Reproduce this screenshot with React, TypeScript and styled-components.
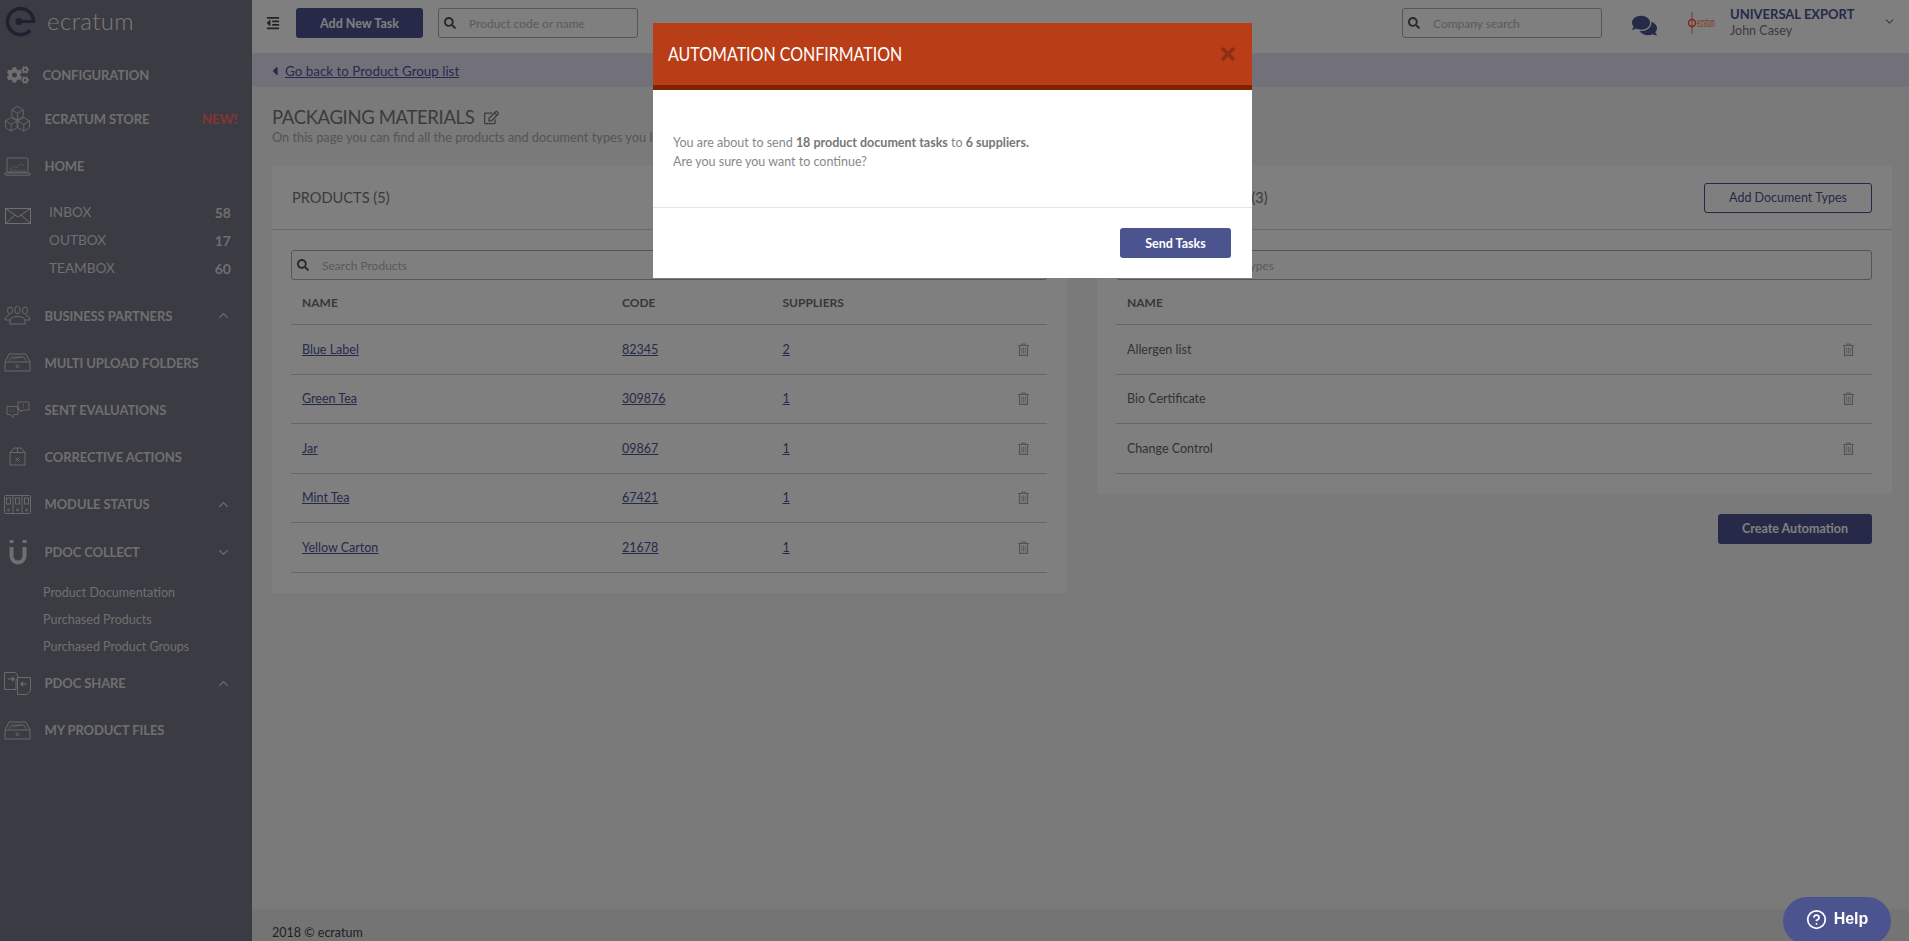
import React from "react";
import styled, { createGlobalStyle } from "styled-components";
import { FaCogs, FaOutdent, FaSearch, FaComments, FaTimes, FaCaretLeft, FaRegEdit } from "react-icons/fa";
import { FiChevronUp, FiChevronDown, FiHelpCircle } from "react-icons/fi";

const Global = createGlobalStyle`
  html, body { margin: 0; padding: 0; height: 100%; overflow: hidden; }
  body { font-family: "Lato", "Liberation Sans", sans-serif; background: #f4f4f4; }
  * { box-sizing: border-box; }
`;

const Shell = styled.div`display: flex; width: 1909px; height: 941px; overflow: hidden;`;
const Sidebar = styled.aside`width: 252px; flex: none; background: #747686; color: #dedede;`;
const Brand = styled.div`height: 53px; display: flex; align-items: center; padding: 0 0 11px 4px; gap: 10px;`;
const BrandName = styled.span`font-size: 24px; font-weight: 300; color: #f2f2f2; letter-spacing: 0.4px; line-height: 1;`;
const NavRow = styled.div<{ $h: number; $mt?: number }>`
  height: ${p => p.$h}px; margin-top: ${p => p.$mt ?? 0}px; display: flex; align-items: center; padding: 0 21px 0 4px;
`;
const NavIcon = styled.span`width: 27px; flex: none; display: flex; justify-content: center; align-items: center; color: #dedede;`;
const NavLabel = styled.span<{ $shift?: number }>`
  margin-left: ${p => 13.5 + (p.$shift ?? 0)}px; flex: 1; font-size: 13px; font-weight: 700; color: #dedede; letter-spacing: -0.1px; white-space: nowrap;
`;
const BoxLabel = styled.span`margin-left: 18px; flex: 1; font-size: 13.6px; font-weight: 400; color: #dedede; white-space: nowrap;`;
const Count = styled.span`font-size: 14px; font-weight: 700; color: #dedede;`;
const NewTag = styled.span`font-size: 13.5px; font-weight: 900; color: #fe6a6a; margin-right: -6px; letter-spacing: -0.3px;`;
const SubList = styled.div`padding-top: 2.5px;`;
const SubRow = styled.div`height: 27px; display: flex; align-items: center; padding-left: 43px; font-size: 12.5px; color: #dedede; white-space: nowrap;`;

const Main = styled.main`flex: 1; min-width: 0; display: flex; flex-direction: column;`;
const TopBar = styled.header`
  height: 54px; flex: none; background: #fff; border-bottom: 1px solid #e6e6e6; display: flex; align-items: flex-start; padding: 8px 0 0 14px; color: #555;
`;
const Burger = styled.span`display: flex; width: 30px; padding-top: 8px; color: #444;`;
const PrimaryButton = styled.button<{ $w: number }>`
  width: ${p => p.$w}px; height: 30px; border: 0; border-radius: 3px; background: #4c5490; color: #fff; font: 700 12.5px "Lato", sans-serif; padding: 0;
`;
const SearchBox = styled.div<{ $w?: number; $ml?: number }>`
  width: ${p => (p.$w ? `${p.$w}px` : "100%")}; height: 30px; margin-left: ${p => p.$ml ?? 0}px; flex: none; display: flex; align-items: center;
  background: #fff; border: 1px solid #aaa; border-radius: 3px; padding-left: 5px; color: #555;
`;
const Placeholder = styled.span<{ $gap: number }>`margin-left: ${p => p.$gap}px; font-size: 12px; color: #b4b4b4; white-space: nowrap;`;
const TopRight = styled.div`margin-left: auto; display: flex; align-items: flex-start;`;
const ChatIcon = styled.span`display: flex; margin: 5px 0 0 30px; color: #4a5493;`;
const Company = styled.div`margin-left: 30px; width: 28px; height: 24px; margin-top: 3px;`;
const UserBlock = styled.div`margin-left: 15px; width: 153px; position: relative; top: -8px;`;
const CompanyName = styled.div`font-size: 13px; font-weight: 700; color: #4a5493; line-height: 17px; margin-top: 6px; white-space: nowrap;`;
const UserName = styled.div`font-size: 12.5px; color: #777; line-height: 15px;`;
const UserChevron = styled.span`display: flex; margin: 7px 13px 0 0; color: #777;`;

const BackBar = styled.div`
  height: 33px; flex: none; background: #e4e2f4; display: flex; align-items: center; padding-left: 15.5px; color: #4d5597; font-size: 13.4px;
`;
const BackLink = styled.a`margin-left: 3.5px; color: #4d5597; text-decoration: underline;`;
const Content = styled.div`flex: 1; padding: 19px 17px 0 20px; background: #f4f4f4;`;
const Heading = styled.h1`margin: 0; height: 22px; display: flex; align-items: center; gap: 10px; font-size: 18.5px; letter-spacing: -0.35px; font-weight: 400; color: #777; white-space: nowrap;`;
const EditIcon = styled.span`display: flex; color: #777;`;
const Intro = styled.p`margin: 0 0 20px; width: 380px; height: 18px; line-height: 18px; font-size: 12.8px; color: #aaa; white-space: nowrap; overflow: hidden;`;
const Columns = styled.div`display: grid; grid-template-columns: 1fr 1fr; gap: 30px; align-items: start;`;
const Panel = styled.section`background: #fff;`;
const PanelHead = styled.div`height: 64px; display: flex; align-items: center; justify-content: space-between; padding: 0 20px; border-bottom: 1px solid #d6d6d6;`;
const PanelTitle = styled.h2`margin: 0; font-size: 14.6px; font-weight: 400; color: #777;`;
const OutlineButton = styled.button`
  width: 168px; height: 30px; background: transparent; border: 1px solid #4a5493; border-radius: 3px; color: #4a5493; font: 400 12.5px "Lato", sans-serif;
`;
const PanelBody = styled.div`padding: 20px 20px 20px 19px;`;
const HeadRow = styled.div<{ $cols: string }>`
  height: 45px; display: grid; grid-template-columns: ${p => p.$cols}; align-items: center; padding: 0 18px 0 11px; border-bottom: 1px solid #ccc;
  font-size: 12px; font-weight: 700; color: #707070;
`;
const DataRow = styled.div<{ $cols: string; $h: number }>`
  height: ${p => p.$h}px; display: grid; grid-template-columns: ${p => p.$cols}; align-items: center; padding: 0 18px 0 11px; border-bottom: 1px solid #ccc;
  font-size: 12.5px; color: #666;
`;
const CellLink = styled.a`color: #4d5597; text-decoration: underline; justify-self: start;`;
const TrashWrap = styled.span`display: flex; justify-content: flex-end; color: #a8a8a8;`;
const ActionRow = styled.div`display: flex; justify-content: flex-end; padding: 20px 20px 0 0;`;

const Footer = styled.footer`height: 32px; flex: none; background: #e8e8e8; padding: 15px 0 0 20px; font-size: 12.5px; line-height: 17px; color: #444;`;

const Overlay = styled.div`position: fixed; inset: 0; background: rgba(0, 0, 0, 0.5); padding: 23px 4px 0 0;`;
const Modal = styled.div`width: 599px; margin: 0 auto; background: #fff;`;
const ModalHead = styled.div`
  height: 67px; background: #b93e17; border-bottom: 5px solid #7e2200; display: flex; align-items: center; justify-content: space-between; padding: 0 14px 0 15px;
`;
const ModalTitle = styled.h3`margin: 0; font-size: 18.5px; font-weight: 400; color: #fff; white-space: nowrap; transform: scaleX(0.865); transform-origin: left center;`;
const CloseIcon = styled.span`display: flex; color: #8c2f12;`;
const ModalBody = styled.div`height: 117px; padding: 43px 20px 0; font-size: 12.5px; line-height: 19px; color: #888;`;
const ModalFoot = styled.div`height: 71px; border-top: 1px solid #e5e5e5; display: flex; justify-content: flex-end; padding: 20px 21px 0 0;`;
const ModalStrong = styled.strong`font-weight: 700; color: #777;`;
const HelpButton = styled.button`
  position: fixed; left: 1783px; top: 897px; width: 108px; height: 48px; border: 0; border-radius: 24px; background: #4c5490; color: #fff;
  display: flex; align-items: center; justify-content: center; gap: 7px; font: 700 16px "Liberation Sans", Arial, sans-serif; padding: 0 0 4px;
`;

const LogoMark = () => (
  <svg width="33" height="33" viewBox="0 0 33 33" fill="none">
    <path d="M29.5 16.5A13 13 0 1 0 26 25.5" stroke="#3e4260" strokeWidth="3.5" />
    <path d="M16 16.5H31" stroke="#3e4260" strokeWidth="3" />
    <circle cx="15" cy="16.5" r="3.6" fill="#3e4260" />
  </svg>
);
const Cubes = () => (
  <svg width="28" height="28" viewBox="0 0 28 28" fill="none" stroke="currentColor" strokeWidth="0.8">
    <path d="M14 1l6 3.5v7L14 15l-6-3.5v-7zM8 4.5l6 3.5 6-3.5M14 8v7" />
    <path d="M7.5 12.5l6 3.5v7l-6 3.5-6-3.5v-7zM1.5 16l6 3.5 6-3.5M7.5 19.5v7" />
    <path d="M20.5 12.5l6 3.5v7l-6 3.5-6-3.5v-7zM14.5 16l6 3.5 6-3.5M20.5 19.5v7" />
  </svg>
);
const Laptop = () => (
  <svg width="27" height="19" viewBox="0 0 27 19" fill="none" stroke="currentColor" strokeWidth="0.9">
    <rect x="3" y="1" width="21" height="14" rx="1" />
    <path d="M1 16h25v1.2a1 1 0 0 1-1 1H2a1 1 0 0 1-1-1z" />
    <path d="M6 12l4-3 3 2 3-4 5 2M6 13h15" strokeWidth="0.7" strokeDasharray="1.5 0.8" />
  </svg>
);
const Mail = () => (
  <svg width="26" height="16" viewBox="0 0 26 16" fill="none" stroke="currentColor" strokeWidth="1" style={{ marginTop: 8 }}>
    <rect x="0.5" y="0.5" width="25" height="15" />
    <path d="M0.5 0.5L13 9l12.5-8.500M0.5 15.500L10 7M25.500 15.500L16 7" />
  </svg>
);
const People = () => (
  <svg width="27" height="19" viewBox="0 0 27 19" fill="none" stroke="currentColor" strokeWidth="0.9">
    <ellipse cx="6" cy="4.500" rx="2.500" ry="3.500" />
    <ellipse cx="13.500" cy="4" rx="2.700" ry="3.800" />
    <ellipse cx="21" cy="4.500" rx="2.500" ry="3.500" />
    <path d="M1 14c0-3 2-4 4-4.500M26 14c0-3-2-4-4-4.500M6 18v-3c0-3 3-4.500 7.500-4.500S21 12 21 15v3zM1 14h5M21 14h5" />
  </svg>
);
const Tray = () => (
  <svg width="27" height="19" viewBox="0 0 27 19" fill="none" stroke="currentColor" strokeWidth="0.9">
    <path d="M1 9L5 1h17l4 8v9H1zM1 9h25" />
    <path d="M5 8l2-4h13l2 4M8 6l10-2" strokeWidth="0.7" />
    <circle cx="13.500" cy="13.500" r="1.300" />
  </svg>
);
const Bubbles = () => (
  <svg width="24" height="17" viewBox="0 0 24 17" fill="none" stroke="currentColor" strokeWidth="0.8">
    <path d="M12 1h11v8h-6l-2 2V9h-3z" />
    <path d="M1 5.500h11v8H8l-1 3-2-3H1z" />
    <path d="M3.500 10h5" strokeDasharray="1 1" />
    <path d="M17.500 3v1.500M17.500 6v.8" />
  </svg>
);
const CrateX = () => (
  <svg width="17" height="19" viewBox="0 0 17 19" fill="none" stroke="currentColor" strokeWidth="0.9">
    <path d="M1 5.500L5 1h7l4 4.500V18H1zM1 5.500h15M8.500 1v4.500" />
    <path d="M6.500 10.500l4 4M10.500 10.500l-4 4" />
  </svg>
);
const Binders = () => (
  <svg width="27" height="19" viewBox="0 0 27 19" fill="none" stroke="currentColor" strokeWidth="0.9">
    <rect x="0.500" y="0.500" width="26" height="18" rx="1" />
    <path d="M9 0.500v18M18 0.500v18" />
    <rect x="2.500" y="3" width="4" height="6" />
    <rect x="11.500" y="3" width="4" height="6" />
    <rect x="20.500" y="3" width="4" height="6" />
    <circle cx="4.500" cy="15" r="1" />
    <circle cx="13.500" cy="15" r="1" />
    <circle cx="22.500" cy="15" r="1" />
  </svg>
);
const Magnet = () => (
  <svg width="18" height="26" viewBox="0 0 18 26" fill="none" stroke="currentColor">
    <path d="M2.500 8v9a6.500 6.500 0 0 0 13 0V8" strokeWidth="4" />
    <path d="M2.500 1v3M15.500 1v3" strokeWidth="4" />
  </svg>
);
const DocSwap = () => (
  <svg width="27" height="23" viewBox="0 0 27 23" fill="none" stroke="currentColor" strokeWidth="0.9">
    <path d="M0.500 0.500h11l2 2v5h-1.500v10h-11.500z" />
    <path d="M13.500 5.500h13v13l-4 4h-9z" />
    <path d="M4 7h6M8 5l2 2-2 2M23 12h-6M19 10l-2 2 2 2" strokeWidth="1.200" />
  </svg>
);
const Trash = () => (
  <svg width="11" height="13" viewBox="0 0 11 13" fill="none" stroke="currentColor">
    <path d="M0 2.500h11M3.500 2.500V1h4v1.500" strokeWidth="1" />
    <path d="M1.500 2.500v9.800h8V2.500" strokeWidth="1.200" />
    <path d="M3.800 4.500v6M5.500 4.500v6M7.200 4.500v6" strokeWidth="0.8" />
  </svg>
);
const TinyLogo = () => (
  <svg width="28" height="24" viewBox="0 0 28 24">
    <path d="M5 1v22" stroke="#ff4a2a" strokeWidth="0.8" />
    <circle cx="5" cy="12" r="3.500" fill="none" stroke="#ff4a2a" strokeWidth="1.400" />
    <text x="10" y="15" fontFamily="Lato, sans-serif" fontSize="9" textLength="18" lengthAdjust="spacingAndGlyphs" fill="#ff6a3a" transform="translate(0 -6) scale(1 1.500)">ecratum</text>
  </svg>
);

const COLS_P = "320px 160.5px 1fr 30px";
const COLS_D = "1fr 30px";
const products = [
  ["Blue Label", "82345", "2"],
  ["Green Tea", "309876", "1"],
  ["Jar", "09867", "1"],
  ["Mint Tea", "67421", "1"],
  ["Yellow Carton", "21678", "1"],
];
const docs = ["Allergen list", "Bio Certificate", "Change Control"];

const Up = () => <FiChevronUp size={15} />;
const Down = () => <FiChevronDown size={15} />;

export default function App() {
  return (
    <>
      <Global />
      <Shell>
        <Sidebar>
          <Brand><LogoMark /><BrandName>ecratum</BrandName></Brand>
          <NavRow $h={44}><NavIcon><FaCogs size={22} /></NavIcon><NavLabel $shift={-2}>CONFIGURATION</NavLabel></NavRow>
          <NavRow $h={44}><NavIcon><Cubes /></NavIcon><NavLabel>ECRATUM STORE</NavLabel><NewTag>NEW!</NewTag></NavRow>
          <NavRow $h={50}><NavIcon><Laptop /></NavIcon><NavLabel>HOME</NavLabel></NavRow>
          <NavRow $h={28} $mt={7}><NavIcon><Mail /></NavIcon><BoxLabel>INBOX</BoxLabel><Count>58</Count></NavRow>
          <NavRow $h={28}><NavIcon /><BoxLabel>OUTBOX</BoxLabel><Count>17</Count></NavRow>
          <NavRow $h={28}><NavIcon /><BoxLabel>TEAMBOX</BoxLabel><Count>60</Count></NavRow>
          <NavRow $h={47} $mt={10}><NavIcon><People /></NavIcon><NavLabel>BUSINESS PARTNERS</NavLabel><Up /></NavRow>
          <NavRow $h={47}><NavIcon><Tray /></NavIcon><NavLabel>MULTI UPLOAD FOLDERS</NavLabel></NavRow>
          <NavRow $h={47}><NavIcon><Bubbles /></NavIcon><NavLabel>SENT EVALUATIONS</NavLabel></NavRow>
          <NavRow $h={47}><NavIcon><CrateX /></NavIcon><NavLabel>CORRECTIVE ACTIONS</NavLabel></NavRow>
          <NavRow $h={48}><NavIcon><Binders /></NavIcon><NavLabel>MODULE STATUS</NavLabel><Up /></NavRow>
          <NavRow $h={48}><NavIcon><Magnet /></NavIcon><NavLabel>PDOC COLLECT</NavLabel><Down /></NavRow>
          <SubList>
            <SubRow>Product Documentation</SubRow>
            <SubRow>Purchased Products</SubRow>
            <SubRow>Purchased Product Groups</SubRow>
          </SubList>
          <NavRow $h={47}><NavIcon><DocSwap /></NavIcon><NavLabel>PDOC SHARE</NavLabel><Up /></NavRow>
          <NavRow $h={47}><NavIcon><Tray /></NavIcon><NavLabel>MY PRODUCT FILES</NavLabel></NavRow>
        </Sidebar>
        <Main>
          <TopBar>
            <Burger><FaOutdent size={14} /></Burger>
            <PrimaryButton $w={127}>Add New Task</PrimaryButton>
            <SearchBox $w={200} $ml={15}><FaSearch size={12} /><Placeholder $gap={13}>Product code or name</Placeholder></SearchBox>
            <TopRight>
              <SearchBox $w={200}><FaSearch size={12} /><Placeholder $gap={13}>Company search</Placeholder></SearchBox>
              <ChatIcon><FaComments size={25} /></ChatIcon>
              <Company><TinyLogo /></Company>
              <UserBlock>
                <CompanyName>UNIVERSAL EXPORT</CompanyName>
                <UserName>John Casey</UserName>
              </UserBlock>
              <UserChevron><FiChevronDown size={13} /></UserChevron>
            </TopRight>
          </TopBar>
          <BackBar><FaCaretLeft size={14} /><BackLink>Go back to Product Group list</BackLink></BackBar>
          <Content>
            <Heading>PACKAGING MATERIALS <EditIcon><FaRegEdit size={15} /></EditIcon></Heading>
            <Intro>On this page you can find all the products and document types you have added to this group.</Intro>
            <Columns>
              <Panel>
                <PanelHead><PanelTitle>PRODUCTS (5)</PanelTitle></PanelHead>
                <PanelBody>
                  <SearchBox><FaSearch size={12} /><Placeholder $gap={13}>Search Products</Placeholder></SearchBox>
                  <HeadRow $cols={COLS_P}><span>NAME</span><span>CODE</span><span>SUPPLIERS</span><span /></HeadRow>
                  {products.map(([n, c, s]) => (
                    <DataRow key={n} $cols={COLS_P} $h={49.5}>
                      <CellLink>{n}</CellLink><CellLink>{c}</CellLink><CellLink>{s}</CellLink>
                      <TrashWrap><Trash /></TrashWrap>
                    </DataRow>
                  ))}
                </PanelBody>
              </Panel>
              <div>
                <Panel>
                  <PanelHead><PanelTitle>DOCUMENT TYPES (3)</PanelTitle><OutlineButton>Add Document Types</OutlineButton></PanelHead>
                  <PanelBody>
                    <SearchBox><FaSearch size={12} /><Placeholder $gap={13}>Search Document Types</Placeholder></SearchBox>
                    <HeadRow $cols={COLS_D}><span>NAME</span><span /></HeadRow>
                    {docs.map(d => (
                      <DataRow key={d} $cols={COLS_D} $h={49.5}>
                        <span>{d}</span>
                        <TrashWrap><Trash /></TrashWrap>
                      </DataRow>
                    ))}
                  </PanelBody>
                </Panel>
                <ActionRow><PrimaryButton $w={154}>Create Automation</PrimaryButton></ActionRow>
              </div>
            </Columns>
          </Content>
          <Footer>2018 © ecratum</Footer>
        </Main>
      </Shell>
      <Overlay>
        <Modal>
          <ModalHead><ModalTitle>AUTOMATION CONFIRMATION</ModalTitle><CloseIcon><FaTimes size={20} /></CloseIcon></ModalHead>
          <ModalBody>
            You are about to send <ModalStrong>18 product document tasks</ModalStrong> to <ModalStrong>6 suppliers.</ModalStrong><br />
            Are you sure you want to continue?
          </ModalBody>
          <ModalFoot><PrimaryButton $w={111}>Send Tasks</PrimaryButton></ModalFoot>
        </Modal>
      </Overlay>
      <HelpButton><FiHelpCircle size={21} />Help</HelpButton>
    </>
  );
}
